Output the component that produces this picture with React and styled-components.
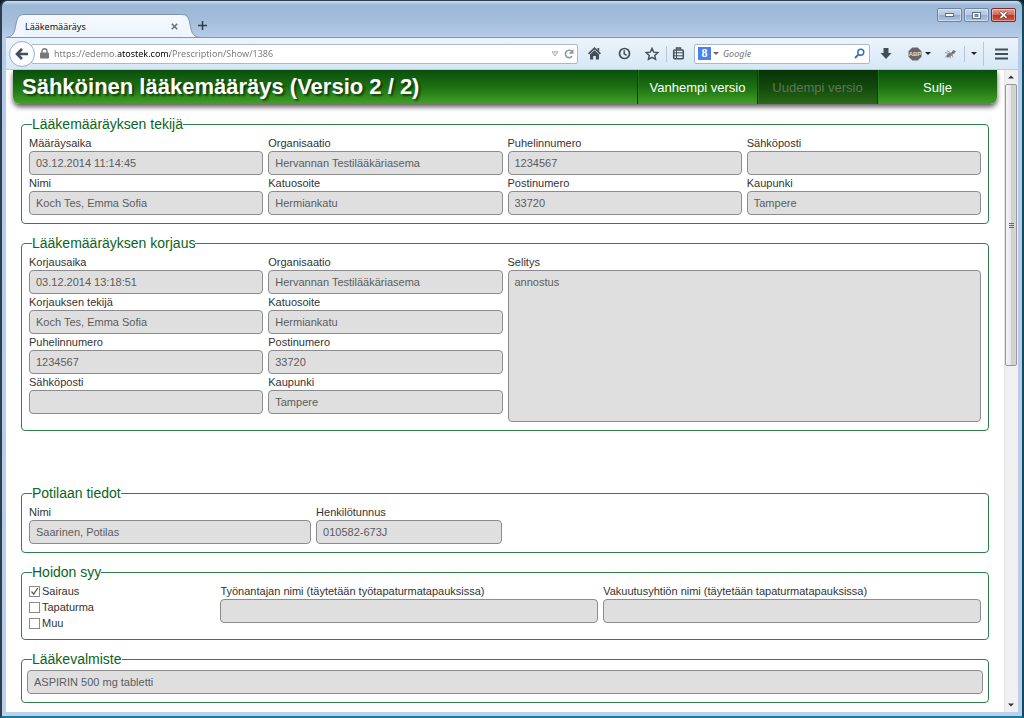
import React from "react";
import styled, { createGlobalStyle } from "styled-components";

const GlobalStyle = createGlobalStyle`
  *, *::before, *::after {
    box-sizing: border-box;
  }
  body {
    margin: 0;
    background: #10202c;
    font-family: "Liberation Sans", Arial, sans-serif;
    font-size: 11px;
  }
  button, input, textarea {
    font: inherit;
    margin: 0;
  }
`;

/* Browser window */

const Window = styled.div`
  height: 100vh;
  display: flex;
  flex-direction: column;
  padding: 0 4px 4px;
  border: solid #2b3f50;
  border-width: 1px 2px 2px;
  border-right-color: #12495c;
  border-bottom-color: #0f7f9c;
  border-radius: 7px 7px 0 0;
  background: linear-gradient(#c9dcf0, #9db8d7 4px, #a3bddb 20px, #b6cce8 36px, #b4cbea 90px, #bccfec);
`;

const TitleBar = styled.div`
  flex: none;
  height: 36px;
  display: flex;
  align-items: flex-end;
`;

const Tab = styled.div`
  display: flex;
  height: 24px;
  margin: 0 -8px -1px 0;
`;

const TabEdge = styled.svg`
  width: 18px;
  height: 24px;
  flex: none;
`;

const TabBody = styled.div`
  width: 158px;
  display: flex;
  align-items: center;
  justify-content: space-between;
  padding-left: 1px;
  border-top: 1px solid #7f94b0;
  background: linear-gradient(#f6fafe, #ebf4fc);
  font: 9px "Noto Sans", "Open Sans", sans-serif;
  color: #111;
`;

const PlainButton = styled.button`
  display: flex;
  align-items: center;
  justify-content: center;
  flex: none;
  width: ${p => p.$width || 24}px;
  height: ${p => p.$height || 24}px;
  padding: 0;
  border: 0;
  background: none;
  color: #424f5a;
`;

const WindowButtons = styled.div`
  display: flex;
  align-self: flex-start;
  gap: 2px;
  margin: 7px 2px 0 auto;
`;

const WindowButton = styled.button`
  display: flex;
  align-items: center;
  justify-content: center;
  width: 25px;
  height: 14px;
  padding: 0;
  border: 1px solid ${p => (p.$close ? "#7a2c2c" : "#6d84a3")};
  border-radius: 2px;
  box-shadow: inset 0 0 0 1px rgba(255, 255, 255, 0.4);
  background: ${p =>
    p.$close
      ? "linear-gradient(#e0a197, #cf6a5a 48%, #b93424 52%, #cf5a45)"
      : "linear-gradient(#c5d7ec, #b1c7e1 48%, #94afd0 52%, #adc5e2)"};
`;

const Toolbar = styled.div`
  flex: none;
  height: 33px;
  display: flex;
  align-items: center;
  border-top: 1px solid #8296b2;
  border-bottom: 1px solid #b9cbe0;
  background: linear-gradient(#ebf4fc, #d8e7f7);
`;

const BackButton = styled.button`
  position: relative;
  display: flex;
  align-items: center;
  justify-content: center;
  flex: none;
  width: 26px;
  height: 26px;
  margin-left: 3px;
  padding: 0;
  border: 1px solid #9fadbf;
  border-radius: 50%;
  background: #fbfdff;
`;

const Field = styled.div`
  display: flex;
  align-items: center;
  height: 20px;
  border: 1px solid #a9b9cc;
  border-radius: 2px;
  background: #fff;
`;

const UrlField = styled(Field)`
  flex: 1;
  min-width: 0;
  margin-left: -4px;
  padding-left: 8px;
`;

/* the host name is darker than the rest of the address */
const UrlInput = styled.input`
  flex: 1;
  min-width: 0;
  margin-left: 5px;
  padding: 0;
  border: 0;
  outline: 0;
  font: 9px "Noto Sans", "Open Sans", sans-serif;
  color: #808080;
  background: linear-gradient(to right, #777 64px, #000 64px, #000 116px, #777 116px);
  background-clip: text;
  -webkit-background-clip: text;
  -webkit-text-fill-color: transparent;
`;

const SearchField = styled(Field)`
  flex: none;
  width: 176px;
  margin-left: 5px;
  padding-left: 3px;
`;

const SearchInput = styled.input`
  flex: 1;
  min-width: 0;
  padding: 0 0 0 4px;
  border: 0;
  outline: 0;
  background: none;
  font: italic 9px "Noto Sans", "Open Sans", sans-serif;

  &::placeholder {
    color: #777;
    opacity: 1;
  }
`;

const Engine = styled.span`
  width: 13px;
  height: 13px;
  background: #4a82ec;
  color: #fff;
  font: bold 12px/13px "Liberation Serif", serif;
  text-align: center;
`;

const Caret = styled.span`
  margin-left: ${p => p.$gap || 0}px;
  border: 3px solid transparent;
  border-top-color: ${p => p.$color || "#222"};
  border-bottom: 0;
`;

const Separator = styled.span`
  width: 1px;
  height: ${p => p.$height || 16}px;
  background: #b8c6d6;
`;

const Viewport = styled.div`
  flex: 1;
  min-height: 0;
  display: flex;
  background: #fff;
`;

const Page = styled.div`
  flex: 1;
  min-width: 0;
  overflow: hidden;
  padding: 0 7px;
`;

const ScrollBar = styled.div`
  flex: none;
  width: 14px;
  display: flex;
  flex-direction: column;
  align-items: flex-start;
  border-left: 1px solid #e3e3e3;
  background: #f0f0f0;
`;

const Thumb = styled.div`
  width: 12px;
  flex: 0 0 44%;
  display: flex;
  flex-direction: column;
  align-items: center;
  justify-content: center;
  gap: 1px;
  margin-bottom: auto;
  border: 1px solid #979797;
  border-radius: 2px;
  background: linear-gradient(to right, #f5f5f5, #e6e6e6 50%, #cfcfcf 55%, #d6d6d6);
`;

const Grip = styled.span`
  width: 5px;
  height: 1px;
  background: #666;
`;

/* Prescription page */

const Header = styled.header`
  display: flex;
  height: 34px;
  overflow: hidden;
  border-radius: 0 0 7px 7px;
  background: linear-gradient(#0a4f0c, #1c7012 50%, #43a026);
`;

const HeaderShadow = styled.div`
  margin-bottom: 11px;
  border-radius: 0 0 7px 7px;
  box-shadow: 0 3px 5px rgba(30, 20, 30, 0.7);
`;

const Title = styled.h1`
  flex: 1;
  margin: 0;
  padding-left: 9px;
  font-size: 22px;
  line-height: 34px;
  white-space: nowrap;
  color: #fff;
  text-shadow: 2px 2px 2px rgba(0, 0, 0, 0.5);
`;

const HeaderButton = styled.button`
  width: 120px;
  padding: 0;
  border: 0;
  border-left: 1px solid #0a3d08;
  background: ${p => (p.disabled ? "rgba(0, 0, 0, 0.35)" : "none")};
  box-shadow: inset 1px 0 0 rgba(60, 150, 40, 0.4);
  color: ${p => (p.disabled ? "#5f7757" : "#fff")};
  font-size: 13px;
`;

const Fieldset = styled.fieldset`
  min-width: 0;
  margin: 0 8px ${p => p.$space || 10}px;
  padding: 2px ${p => (p.$wide ? 5 : 7)}px 8px;
  border: 1px solid #2d8049;
  border-radius: 4px;
`;

const Legend = styled.legend`
  margin-left: ${p => (p.$wide ? 5 : 3)}px;
  padding: 0;
  font-size: 14px;
  line-height: 18px;
  color: #0a6420;
`;

const Grid = styled.div`
  display: grid;
  grid-template-columns: repeat(20, minmax(0, 1fr));
  column-gap: 5px;
`;

const Cell = styled.div`
  display: flex;
  flex-direction: column;
  grid-column: span ${p => p.$span};
`;

const Label = styled.label`
  line-height: 16px;
  white-space: nowrap;
  color: #333;
`;

const Input = styled.input`
  width: 100%;
  height: 24px;
  padding: 0 6px;
  border: 1px solid #8c8c8c;
  border-radius: 4px;
  outline: 0;
  background: #dfdfdf;
  color: #5c5c5c;
`;

const TextArea = styled.textarea`
  width: 100%;
  height: 152px;
  padding: 3px 6px;
  border: 1px solid #8c8c8c;
  border-radius: 4px;
  outline: 0;
  resize: none;
  background: #dfdfdf;
  color: #5c5c5c;
  line-height: 16px;
`;

const CheckLabel = styled.label`
  display: flex;
  align-items: center;
  gap: 2px;
  height: 16px;
  color: #333;
`;

const CheckBox = styled.input`
  appearance: none;
  width: 11px;
  height: 11px;
  border: 1px solid #8a8a8a;
  background: #fff;

  &:checked {
    background: #fff
      url("data:image/svg+xml,%3Csvg xmlns='http://www.w3.org/2000/svg' viewBox='0 0 9 9'%3E%3Cpath d='M1.5 4.5L3.7 7.2L7.7 1' fill='none' stroke='%23555' stroke-width='1.2'/%3E%3C/svg%3E");
  }
`;

const author = [
  ["Määräysaika", "03.12.2014 11:14:45"],
  ["Organisaatio", "Hervannan Testilääkäriasema"],
  ["Puhelinnumero", "1234567"],
  ["Sähköposti", ""],
  ["Nimi", "Koch Tes, Emma Sofia"],
  ["Katuosoite", "Hermiankatu"],
  ["Postinumero", "33720"],
  ["Kaupunki", "Tampere"]
];

const correction = [
  ["Korjausaika", "03.12.2014 13:18:51"],
  ["Organisaatio", "Hervannan Testilääkäriasema"],
  ["Korjauksen tekijä", "Koch Tes, Emma Sofia"],
  ["Katuosoite", "Hermiankatu"],
  ["Puhelinnumero", "1234567"],
  ["Postinumero", "33720"],
  ["Sähköposti", ""],
  ["Kaupunki", "Tampere"]
];

const reasons = [["Sairaus", true], ["Tapaturma", false], ["Muu", false]];

function TextField({ id, label, value = "", span = 5 }) {
  return (
    <Cell $span={span}>
      <Label htmlFor={id}>{label}</Label>
      <Input id={id} type="text" value={value} readOnly />
    </Cell>
  );
}

function BrowserTab() {
  return (
    <Tab>
      <TabEdge viewBox="0 0 18 24">
        <path d="M0 24C5 23 7.500 21 9 15C11 6 11 .5 18 .5V24Z" fill="#eff6fd" />
        <path d="M0 23.500C5 23 7.500 21 9 15C11 6 11 .5 18 .5" fill="none" stroke="#7f94b0" />
      </TabEdge>
      <TabBody>
        <span>Lääkemääräys</span>
        <PlainButton $width={16} $height={16} aria-label="Sulje välilehti">
          <svg width="7" height="7" viewBox="0 0 7 7">
            <path d="M.8 .8L6.200 6.200M6.200 .8L.8 6.200" stroke="#666f7a" strokeWidth="1.600" />
          </svg>
        </PlainButton>
      </TabBody>
      <TabEdge viewBox="0 0 18 24">
        <path d="M18 24C13 23 10.500 21 9 15C7 6 7 .5 0 .5V24Z" fill="#eff6fd" />
        <path d="M18 23.500C13 23 10.500 21 9 15C7 6 7 .5 0 .5" fill="none" stroke="#7f94b0" />
      </TabEdge>
    </Tab>
  );
}

function BrowserToolbar() {
  return (
    <Toolbar>
      <BackButton aria-label="Takaisin">
        <svg width="14" height="12" viewBox="0 0 14 12">
          <path d="M7 1L2 6L7 11M2.500 6H13" fill="none" stroke="#424f5a" strokeWidth="2.600" />
        </svg>
      </BackButton>
      <UrlField>
        <svg width="9" height="11" viewBox="0 0 9 11">
          <rect x="0" y="4.500" width="9" height="6" rx="1" fill="#777" />
          <path d="M2 5V3.200a2.500 2.500 0 0 1 5 0V5" fill="none" stroke="#777" strokeWidth="1.400" />
        </svg>
        <UrlInput
          aria-label="Osoite"
          defaultValue="https://edemo.atostek.com/Prescription/Show/1386"
        />
        <PlainButton $width={12} $height={18} aria-label="Historia">
          <svg width="8" height="6" viewBox="0 0 8 6">
            <path d="M1 .8H7L4 5Z" fill="#e3e8ee" stroke="#a8b2bd" />
          </svg>
        </PlainButton>
        <PlainButton $width={16} $height={18} aria-label="Päivitä">
          <svg width="10" height="10" viewBox="0 0 10 10">
            <path d="M8 7.300A3.700 3.700 0 1 1 7.600 2.200" fill="none" stroke="#8c97a3" strokeWidth="1.600" />
            <path d="M9.500 0V4.800H4.700Z" fill="#8c97a3" />
          </svg>
        </PlainButton>
      </UrlField>
      <PlainButton $width={32} aria-label="Koti">
        <svg width="13" height="13" viewBox="0 0 13 13">
          <path d="M.6 6.800L6.500 1.200L12.400 6.800" fill="none" stroke="#424f5a" strokeWidth="1.700" />
          <path d="M9.500 1H11.200V4.500L9.500 3Z" fill="#424f5a" />
          <path d="M6.500 3.300L11 7.400V12.500H7.800V9H5.200V12.500H2V7.400Z" fill="#424f5a" />
        </svg>
      </PlainButton>
      <PlainButton $width={28} aria-label="Viimeisimmät">
        <svg width="13" height="13" viewBox="0 0 13 13" fill="none" stroke="#424f5a">
          <circle cx="6.500" cy="6.500" r="5" strokeWidth="1.700" />
          <path d="M6.200 3.200V6.800L8.600 8.400" strokeWidth="1.400" />
        </svg>
      </PlainButton>
      <PlainButton $width={28} aria-label="Lisää kirjanmerkki">
        <svg width="14" height="14" viewBox="0 0 14 14">
          <path
            d="M7 1.400L8.700 5.200L12.800 5.600L9.700 8.400L10.600 12.400L7 10.300L3.400 12.400L4.300 8.400L1.200 5.600L5.300 5.200Z"
            fill="none"
            stroke="#424f5a"
            strokeWidth="1.400"
          />
        </svg>
      </PlainButton>
      <Separator />
      <PlainButton $width={22} aria-label="Kirjanmerkit">
        <svg width="13" height="13" viewBox="0 0 13 13" fill="none" stroke="#424f5a">
          <rect x="1.700" y="3" width="9.600" height="8.800" rx="1" strokeWidth="1.500" />
          <path d="M4.500 2.200V1H8.500V2.200" strokeWidth="1.500" />
          <path d="M2 5.800H11M2 8.800H11M4.500 3.500V11.500" strokeWidth="1" />
        </svg>
      </PlainButton>
      <SearchField>
        <Engine>8</Engine>
        <Caret $gap={2} $color="#666" />
        <SearchInput aria-label="Haku" placeholder="Google" />
        <PlainButton $width={20} $height={18} aria-label="Hae">
          <svg width="11" height="11" viewBox="0 0 11 11" fill="none" stroke="#2f6fb5">
            <circle cx="6.800" cy="4.200" r="3" strokeWidth="1.400" />
            <path d="M4.600 6.400L1 10" strokeWidth="2" />
          </svg>
        </PlainButton>
      </SearchField>
      <PlainButton $width={32} aria-label="Lataukset">
        <svg width="12" height="13" viewBox="0 0 12 13">
          <path d="M3.500 1H8.500V6H11.500L6 12L.5 6H3.500Z" fill="#424f5a" />
        </svg>
      </PlainButton>
      <PlainButton $width={34} aria-label="Mainosten esto">
        <svg width="14" height="14" viewBox="0 0 14 14">
          <path d="M4.300 .5H9.700L13.500 4.300V9.700L9.700 13.500H4.300L.5 9.700V4.300Z" fill="#666" />
          <text x="7" y="9.300" fontSize="6" fontWeight="bold" textAnchor="middle" fill="#ddd">
            ABP
          </text>
        </svg>
        <Caret $gap={3} />
      </PlainButton>
      <PlainButton $width={28} aria-label="Firebug">
        <svg width="12" height="10" viewBox="0 0 12 10">
          <ellipse cx="5.500" cy="6" rx="3.600" ry="1.700" transform="rotate(-30 5.500 6)" fill="#777" />
          <circle cx="9.400" cy="3.200" r="1.500" fill="#666" />
          <path
            d="M1 3.500L5 4.500M3 1.500L6.500 4M6 9.500L6.500 6M9 8.500L8 5M1 8.500L3 7M9 1L10 3L12 2.500"
            stroke="#999"
          />
        </svg>
      </PlainButton>
      <Separator />
      <PlainButton $width={18} aria-label="Valikko">
        <Caret />
      </PlainButton>
      <Separator $height={24} />
      <PlainButton $width={34} aria-label="Avaa valikko">
        <svg width="13" height="12" viewBox="0 0 13 12">
          <path d="M0 1.500H13M0 6H13M0 10.500H13" stroke="#424f5a" strokeWidth="2" />
        </svg>
      </PlainButton>
    </Toolbar>
  );
}

function CorrectionFields() {
  return (
    <Grid>
      {correction.map(([label, value], i) => (
        <TextField key={label} id={`correction-${i}`} label={label} value={value} span={10} />
      ))}
    </Grid>
  );
}

function Prescription() {
  return (
    <Page>
      <HeaderShadow>
        <Header>
          <Title>Sähköinen lääkemääräys (Versio 2 / 2)</Title>
          <HeaderButton>Vanhempi versio</HeaderButton>
          <HeaderButton disabled>Uudempi versio</HeaderButton>
          <HeaderButton>Sulje</HeaderButton>
        </Header>
      </HeaderShadow>

      <Fieldset>
        <Legend>Lääkemääräyksen tekijä</Legend>
        <Grid>
          {author.map(([label, value], i) => (
            <TextField key={label} id={`author-${i}`} label={label} value={value} />
          ))}
        </Grid>
      </Fieldset>

      <Fieldset $space={53}>
        <Legend>Lääkemääräyksen korjaus</Legend>
        <Grid>
          <Cell $span={10}>
            <CorrectionFields />
          </Cell>
          <Cell $span={10}>
            <Label htmlFor="explanation">Selitys</Label>
            <TextArea id="explanation" value="annostus" readOnly />
          </Cell>
        </Grid>
      </Fieldset>

      <Fieldset>
        <Legend>Potilaan tiedot</Legend>
        <Grid>
          <TextField id="patient-name" label="Nimi" value="Saarinen, Potilas" span={6} />
          <TextField id="patient-id" label="Henkilötunnus" value="010582-673J" span={4} />
        </Grid>
      </Fieldset>

      <Fieldset>
        <Legend>Hoidon syy</Legend>
        <Grid>
          <Cell $span={4}>
            {reasons.map(([label, checked]) => (
              <CheckLabel key={label}>
                <CheckBox type="checkbox" defaultChecked={checked} />
                {label}
              </CheckLabel>
            ))}
          </Cell>
          <TextField
            id="employer"
            label="Työnantajan nimi (täytetään työtapaturmatapauksissa)"
            span={8}
          />
          <TextField
            id="insurer"
            label="Vakuutusyhtiön nimi (täytetään tapaturmatapauksissa)"
            span={8}
          />
        </Grid>
      </Fieldset>

      <Fieldset $wide>
        <Legend $wide>Lääkevalmiste</Legend>
        <Input type="text" aria-label="Lääkevalmiste" value="ASPIRIN 500 mg tabletti" readOnly />
      </Fieldset>
    </Page>
  );
}

export default function App() {
  return (
    <>
      <GlobalStyle />
      <Window>
        <TitleBar>
          <BrowserTab />
          <PlainButton $width={20} aria-label="Uusi välilehti">
            <svg width="9" height="9" viewBox="0 0 9 9">
              <path d="M4.500 0V9M0 4.500H9" stroke="#2f3b47" strokeWidth="1.500" />
            </svg>
          </PlainButton>
          <WindowButtons>
            <WindowButton aria-label="Pienennä">
              <svg width="9" height="4" viewBox="0 0 9 4">
                <rect x=".5" y=".5" width="8" height="3" fill="#fff" stroke="#5d6f86" />
              </svg>
            </WindowButton>
            <WindowButton aria-label="Suurenna">
              <svg width="9" height="7" viewBox="0 0 9 7">
                <rect x=".5" y=".5" width="8" height="6" fill="#fff" stroke="#5d6f86" />
                <rect x="3" y="2.500" width="3" height="2" fill="#8aa2c2" stroke="#5d6f86" strokeWidth=".8" />
              </svg>
            </WindowButton>
            <WindowButton $close aria-label="Sulje ikkuna">
              <svg width="9" height="8" viewBox="0 0 9 8">
                <path d="M1.200 1L7.800 7M7.800 1L1.200 7" stroke="#6b2b2b" strokeWidth="3" />
                <path d="M1.500 1.200L7.500 6.800M7.500 1.200L1.500 6.800" stroke="#fff" strokeWidth="1.800" />
              </svg>
            </WindowButton>
          </WindowButtons>
        </TitleBar>
        <BrowserToolbar />
        <Viewport>
          <Prescription />
          <ScrollBar>
            <PlainButton $width={12} $height={14} aria-label="Vieritä ylös">
              <svg width="6" height="4" viewBox="0 0 6 4">
                <path d="M0 3.500L3 .5L6 3.500Z" fill="#333" />
              </svg>
            </PlainButton>
            <Thumb>
              <Grip />
              <Grip />
              <Grip />
            </Thumb>
            <PlainButton $width={12} $height={14} aria-label="Vieritä alas">
              <svg width="6" height="4" viewBox="0 0 6 4">
                <path d="M0 .5H6L3 3.500Z" fill="#333" />
              </svg>
            </PlainButton>
          </ScrollBar>
        </Viewport>
      </Window>
    </>
  );
}
